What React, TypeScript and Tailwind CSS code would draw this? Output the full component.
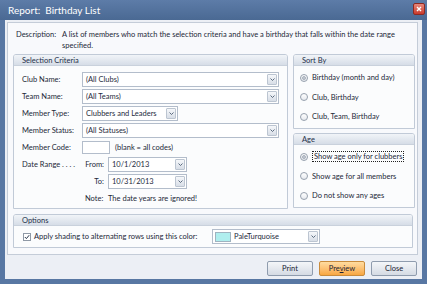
import React from 'react';

const Chevron = () => (
  <svg width="5" height="3" viewBox="0 0 5 3" className="block">
    <path d="M0.5 0.5 L2.5 2.5 L4.5 0.5" fill="none" stroke="#4d5d73" strokeWidth="0.9" />
  </svg>
);

function Combo({ value, className = '' }: { value: string; className?: string }) {
  return (
    <div className={`h-[15px] flex items-center bg-white border border-[#b3bdcb] pl-[3px] pr-[1px] ${className}`}>
      <span className="flex-1 whitespace-nowrap text-[#1e2b3d]">{value}</span>
      <div className="w-[10px] h-[11px] flex items-center justify-center border border-[#bcc5d1] rounded-[1px] bg-gradient-to-b from-[#f5f7fa] to-[#d8dee7]">
        <Chevron />
      </div>
    </div>
  );
}

function Group({ title, className = '', children }: { title: string; className?: string; children: React.ReactNode }) {
  return (
    <div className={`flex flex-col border border-[#c1cad7] rounded-t-[3px] bg-[#fbfcfd] ${className}`}>
      <div className="h-[11px] flex items-center px-[8px] border-b border-[#c9d1dc] rounded-t-[2px] bg-gradient-to-b from-[#f1f4f8] to-[#d6dde7] text-[#1d2f48]">
        {title}
      </div>
      {children}
    </div>
  );
}

function Radio({ label, checked = false, focus = false }: { label: string; checked?: boolean; focus?: boolean }) {
  return (
    <div className="h-[19.5px] flex items-center pl-[6px]">
      <div className="w-[8px] h-[8px] rounded-full border border-[#97a1ae] bg-gradient-to-b from-[#ffffff] to-[#e6e9ee] flex items-center justify-center">
        {checked && <div className="w-[4px] h-[4px] rounded-full bg-[#c3c9d2] border border-[#a9b1bc]" />}
      </div>
      <span className={`ml-[4px] whitespace-nowrap ${focus ? 'border border-dotted border-[#222] px-[1px] -ml-[1px] leading-[9px]' : ''}`}>
        {label}
      </span>
    </div>
  );
}

function Row({ label, children }: { label: string; children?: React.ReactNode }) {
  return (
    <div className="h-[17px] flex items-center">
      <span className="w-[60px] whitespace-nowrap">{label}</span>
      {children}
    </div>
  );
}

function Button({ label, primary = false }: { label: React.ReactNode; primary?: boolean }) {
  return (
    <div
      className={`w-[46px] h-[15px] flex items-center justify-center rounded-[2px] border text-[#1a2333] ${
        primary
          ? 'border-[#c98b3c] bg-gradient-to-b from-[#ffdca0] to-[#f8a740]'
          : 'border-[#8f9cae] bg-gradient-to-b from-[#f4f6f9] to-[#d5dbe4]'
      }`}
    >
      {label}
    </div>
  );
}

export default function App() {
  return (
    <div className="w-[427px] h-[284px] flex flex-col bg-[#5877a3] font-['Lato',sans-serif] text-[7.5px] leading-[11px] text-[#1c2838]">
      {/* title bar */}
      <div className="h-[20px] flex items-center justify-between pl-[8px] pr-[2px] bg-gradient-to-b from-[#5d7ca8] to-[#4a6993]">
        <span className="text-white text-[10px] whitespace-pre">Report:  Birthday List</span>
        <div className="w-[12px] h-[12px] -mt-[3px] flex items-center justify-center rounded-[2px] border border-[#8c2a22] bg-gradient-to-b from-[#e8877b] to-[#c9382b]">
          <svg width="6" height="6" viewBox="0 0 6 6">
            <path d="M1 1 L5 5 M5 1 L1 5" stroke="white" strokeWidth="1.4" />
          </svg>
        </div>
      </div>

      {/* client area */}
      <div className="flex-1 mx-[5px] mb-[5px] bg-[#eceff5] flex flex-col pt-[2px] pl-[2px] pr-[4px]">
        <div className="h-[233px] border border-[#c4ccd8] bg-[#f8f9fc] flex flex-col">
          {/* description */}
          <div className="flex pl-[8px] pt-[6px]">
            <span className="w-[46px]">Description:</span>
            <span className="whitespace-nowrap">
              A list of members who match the selection criteria and have a birthday that falls within the date range
              <br />
              specified.
            </span>
          </div>

          <div className="flex mt-[3px] ml-[5px] gap-[5px]">
            <Group title="Selection Criteria" className="w-[275px] h-[155px]">
              <div className="flex flex-col pl-[8px] pt-[5px]">
                <Row label="Club Name:">
                  <Combo value="(All Clubs)" className="w-[197px]" />
                </Row>
                <Row label="Team Name:">
                  <Combo value="(All Teams)" className="w-[197px]" />
                </Row>
                <Row label="Member Type:">
                  <Combo value="Clubbers and Leaders" className="w-[96px]" />
                </Row>
                <Row label="Member Status:">
                  <Combo value="(All Statuses)" className="w-[197px]" />
                </Row>
                <Row label="Member Code:">
                  <div className="w-[28px] h-[13px] bg-white border border-[#b3bdcb]" />
                  <span className="ml-[5px] whitespace-nowrap">(blank = all codes)</span>
                </Row>
                <Row label="Date Range . . . .">
                  <span className="w-[22px] text-right">From:</span>
                  <Combo value="10/1/2013" className="w-[79px] ml-[4px]" />
                </Row>
                <Row label="">
                  <span className="w-[22px] text-right">To:</span>
                  <Combo value="10/31/2013" className="w-[79px] ml-[4px]" />
                </Row>
                <Row label="">
                  <span className="w-[22px] pl-[3px]">Note:</span>
                  <span className="ml-[4px] whitespace-nowrap">The date years are ignored!</span>
                </Row>
              </div>
            </Group>

            <div className="w-[122px] flex flex-col gap-[4px]">
              <Group title="Sort By" className="h-[75px]">
                <div className="flex flex-col pt-[2px]">
                  <Radio label="Birthday (month and day)" checked />
                  <Radio label="Club, Birthday" />
                  <Radio label="Club, Team, Birthday" />
                </div>
              </Group>
              <Group title="Age" className="h-[75px]">
                <div className="flex flex-col pt-[2px]">
                  <Radio label="Show age only for clubbers" checked focus />
                  <Radio label="Show age for all members" />
                  <Radio label="Do not show any ages" />
                </div>
              </Group>
            </div>
          </div>

          <Group title="Options" className="mt-[5px] ml-[5px] w-[400px] h-[34px]">
            <div className="flex items-center pl-[9px] pt-[3px]">
              <div className="w-[8px] h-[8px] bg-white border border-[#8f99a6] flex items-center justify-center">
                <svg width="6" height="6" viewBox="0 0 6 6">
                  <path d="M0.8 3 L2.4 4.6 L5.2 1.2" fill="none" stroke="#25344a" strokeWidth="1" />
                </svg>
              </div>
              <span className="ml-[3px] w-[178px] whitespace-nowrap">Apply shading to alternating rows using this color:</span>
              <div className="w-[108px] h-[15px] flex items-center bg-white border border-[#b3bdcb] pl-[2px] pr-[1px]">
                <div className="w-[16px] h-[10px] bg-[#afeeee] border border-[#9fb3c0]" />
                <span className="flex-1 ml-[3px] text-[#1e2b3d]">PaleTurquoise</span>
                <div className="w-[10px] h-[11px] flex items-center justify-center border border-[#bcc5d1] rounded-[1px] bg-gradient-to-b from-[#f5f7fa] to-[#d8dee7]">
                  <Chevron />
                </div>
              </div>
            </div>
          </Group>
        </div>

        <div className="flex justify-end gap-[6px] mt-[6px] pr-[1px]">
          <Button label="Print" />
          <Button
            primary
            label={
              <span>
                Pre<span className="underline">v</span>iew
              </span>
            }
          />
          <Button label="Close" />
        </div>
      </div>
    </div>
  );
}
